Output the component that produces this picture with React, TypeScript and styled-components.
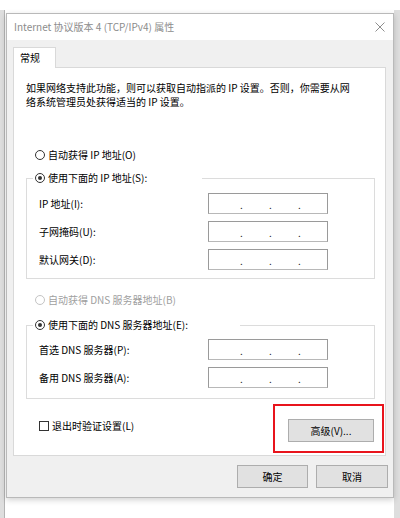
import styled, { createGlobalStyle } from 'styled-components'

const GlobalStyle = createGlobalStyle`
    * {
        box-sizing: border-box;
    }
    html,
    body {
        margin: 0;
        padding: 0;
        background: #ffffff;
    }
    body {
        font-family: 'Noto Sans CJK SC', 'Microsoft YaHei UI', sans-serif;
        font-size: 10px;
        color: #000000;
    }
`

export default function App() {
    return (
        <>
            <GlobalStyle />
            <Backdrop>
                <Dialog>
                    <TitleBar>
                        <Title>Internet 协议版本 4 (TCP/IPv4) 属性</Title>
                        <CloseButton aria-label="关闭">
                            <svg width="10" height="10" viewBox="0 0 10 10">
                                <path
                                    d="M0.5 0.5 L9.5 9.5 M9.5 0.5 L0.5 9.5"
                                    stroke="#8e8e8e"
                                    strokeWidth="1"
                                    fill="none"
                                />
                            </svg>
                        </CloseButton>
                    </TitleBar>

                    <Body>
                        <Tabs>
                            <Tab>常规</Tab>
                        </Tabs>
                        <Panel>
                            <Description>
                                如果网络支持此功能，则可以获取自动指派的 IP 设置。否则，你需要从网
                                <br />
                                络系统管理员处获得适当的 IP 设置。
                            </Description>

                            <OptionRow $top={39}>
                                <Radio />
                                自动获得 IP 地址(O)
                            </OptionRow>

                            <GroupBox $top={9} $bottom={8} $pad={8}>
                                <Legend $width={169}>
                                    <Radio $checked />
                                    使用下面的 IP 地址(S):
                                </Legend>
                                <Fields>
                                    <IpRow label="IP 地址(I):" />
                                    <IpRow label="子网掩码(U):" />
                                    <IpRow label="默认网关(D):" />
                                </Fields>
                            </GroupBox>

                            <OptionRow $top={14} $disabled>
                                <Radio $disabled />
                                自动获得 DNS 服务器地址(B)
                            </OptionRow>

                            <GroupBox $top={11} $bottom={10} $pad={7}>
                                <Legend $width={207}>
                                    <Radio $checked />
                                    使用下面的 DNS 服务器地址(E):
                                </Legend>
                                <Fields>
                                    <IpRow label="首选 DNS 服务器(P):" />
                                    <IpRow label="备用 DNS 服务器(A):" />
                                </Fields>
                            </GroupBox>

                            <BottomRow>
                                <CheckRow>
                                    <CheckBox />
                                    退出时验证设置(L)
                                </CheckRow>
                                <AdvancedWrap>
                                    <Button $width={86}>高级(V)...</Button>
                                    <Highlight />
                                </AdvancedWrap>
                            </BottomRow>
                        </Panel>

                        <Footer>
                            <Button $width={71}>确定</Button>
                            <Button $width={72}>取消</Button>
                        </Footer>
                    </Body>
                </Dialog>
            </Backdrop>
        </>
    )
}

function IpRow({ label }: { label: string }) {
    return (
        <FieldRow>
            <FieldLabel>{label}</FieldLabel>
            <IpInput>
                <Dot>.</Dot>
                <Dot>.</Dot>
                <Dot>.</Dot>
            </IpInput>
        </FieldRow>
    )
}

const Backdrop = styled.div`
    margin-top: 10px;
    height: 508px;
    border-left: 4px solid #dedede;
    border-right: 6px solid #dedede;
    box-shadow: inset 1px 0 0 #b4b4b4;
    background: #ffffff;
    padding: 3px 0 0 2px;
`

const Dialog = styled.div`
    width: 388px;
    border: 1px solid #b9b9b9;
    background: #f0f0f0;
    box-shadow: 0 2px 6px rgba(0, 0, 0, 0.18);
`

const TitleBar = styled.div`
    height: 26px;
    background: #ffffff;
    display: flex;
    align-items: center;
    justify-content: space-between;
    padding: 0 7px 1px 7px;
`

const Title = styled.span`
    color: #8c8c8c;
    font-size: 10px;
    line-height: 12px;
`

const CloseButton = styled.span`
    display: flex;
    width: 10px;
    height: 10px;
    margin-right: 1px;
`

const Body = styled.div`
    padding: 7px 5px 9px 6px;
`

const Tabs = styled.div`
    display: flex;
    position: relative;
    z-index: 1;
    margin-bottom: -1px;
`

const Tab = styled.div`
    width: 43px;
    height: 21px;
    padding: 3px 0 0 6px;
    line-height: 14px;
    background: #ffffff;
    border: 1px solid #d9d9d9;
    border-bottom: none;
`

const Panel = styled.div`
    margin-right: 2px;
    background: #ffffff;
    border: 1px solid #d9d9d9;
    padding: 13px 10px 13px 12px;
`

const Description = styled.p`
    margin: 0;
    line-height: 14px;
    white-space: nowrap;
`

const OptionRow = styled.div<{ $top: number; $disabled?: boolean }>`
    display: flex;
    align-items: center;
    gap: 3px;
    height: 14px;
    margin: ${({ $top }) => $top}px 0 0 9px;
    color: ${({ $disabled }) => ($disabled ? '#a0a0a0' : '#000000')};
    line-height: 14px;
`

const Radio = styled.span<{ $checked?: boolean; $disabled?: boolean }>`
    display: inline-flex;
    align-items: center;
    justify-content: center;
    flex: none;
    width: 10px;
    height: 10px;
    border-radius: 50%;
    border: 1px solid ${({ $disabled }) => ($disabled ? '#c4c4c4' : '#333333')};
    background: #ffffff;

    &::after {
        content: '';
        display: ${({ $checked }) => ($checked ? 'block' : 'none')};
        width: 4px;
        height: 4px;
        border-radius: 50%;
        background: #333333;
    }
`

const GroupBox = styled.fieldset<{ $top: number; $bottom: number; $pad: number }>`
    margin: ${({ $top }) => $top}px 0 0 0;
    padding: ${({ $pad }) => $pad}px 0 ${({ $bottom }) => $bottom}px 0;
    border: 1px solid #dcdcdc;
    min-width: 0;
`

const Legend = styled.legend<{ $width: number }>`
    display: flex;
    align-items: center;
    gap: 3px;
    width: ${({ $width }) => $width}px;
    height: 14px;
    margin-left: 6px;
    padding: 0 0 0 2px;
    line-height: 14px;
    background: #ffffff;
`

const Fields = styled.div`
    display: flex;
    flex-direction: column;
    gap: 7px;
    padding-left: 12px;
`

const FieldRow = styled.div`
    display: grid;
    grid-template-columns: 169px 120px;
    align-items: center;
`

const FieldLabel = styled.span`
    line-height: 14px;
    white-space: nowrap;
`

const IpInput = styled.div`
    display: flex;
    align-items: center;
    gap: 26px;
    width: 120px;
    height: 21px;
    padding: 3px 0 0 31px;
    background: #ffffff;
    border: 1px solid #9a9a9a;
    border-bottom-color: #b8b8b8;
`

const Dot = styled.span`
    width: 3px;
    font-size: 10px;
    line-height: 10px;
    color: #222222;
`

const BottomRow = styled.div`
    display: flex;
    justify-content: space-between;
    align-items: flex-start;
    margin-top: 20px;
`

const CheckRow = styled.div`
    display: flex;
    align-items: center;
    gap: 3px;
    height: 14px;
    margin-left: 13px;
    line-height: 14px;
`

const CheckBox = styled.span`
    flex: none;
    width: 10px;
    height: 10px;
    border: 1px solid #333333;
    background: #ffffff;
`

const AdvancedWrap = styled.div`
    position: relative;
    display: flex;
    margin-right: 1px;
`

const Highlight = styled.span`
    position: absolute;
    top: -15px;
    left: -15px;
    right: -10px;
    bottom: -11px;
    border: 2px solid #e8141c;
    pointer-events: none;
`

const Button = styled.button<{ $width: number }>`
    width: ${({ $width }) => $width}px;
    height: 23px;
    padding: 0;
    font-family: inherit;
    font-size: 10px;
    line-height: 14px;
    color: #000000;
    background: #e1e1e1;
    border: 1px solid #adadad;
    border-radius: 0;
`

const Footer = styled.div`
    display: flex;
    justify-content: flex-end;
    gap: 8px;
    margin-top: 9px;
`
